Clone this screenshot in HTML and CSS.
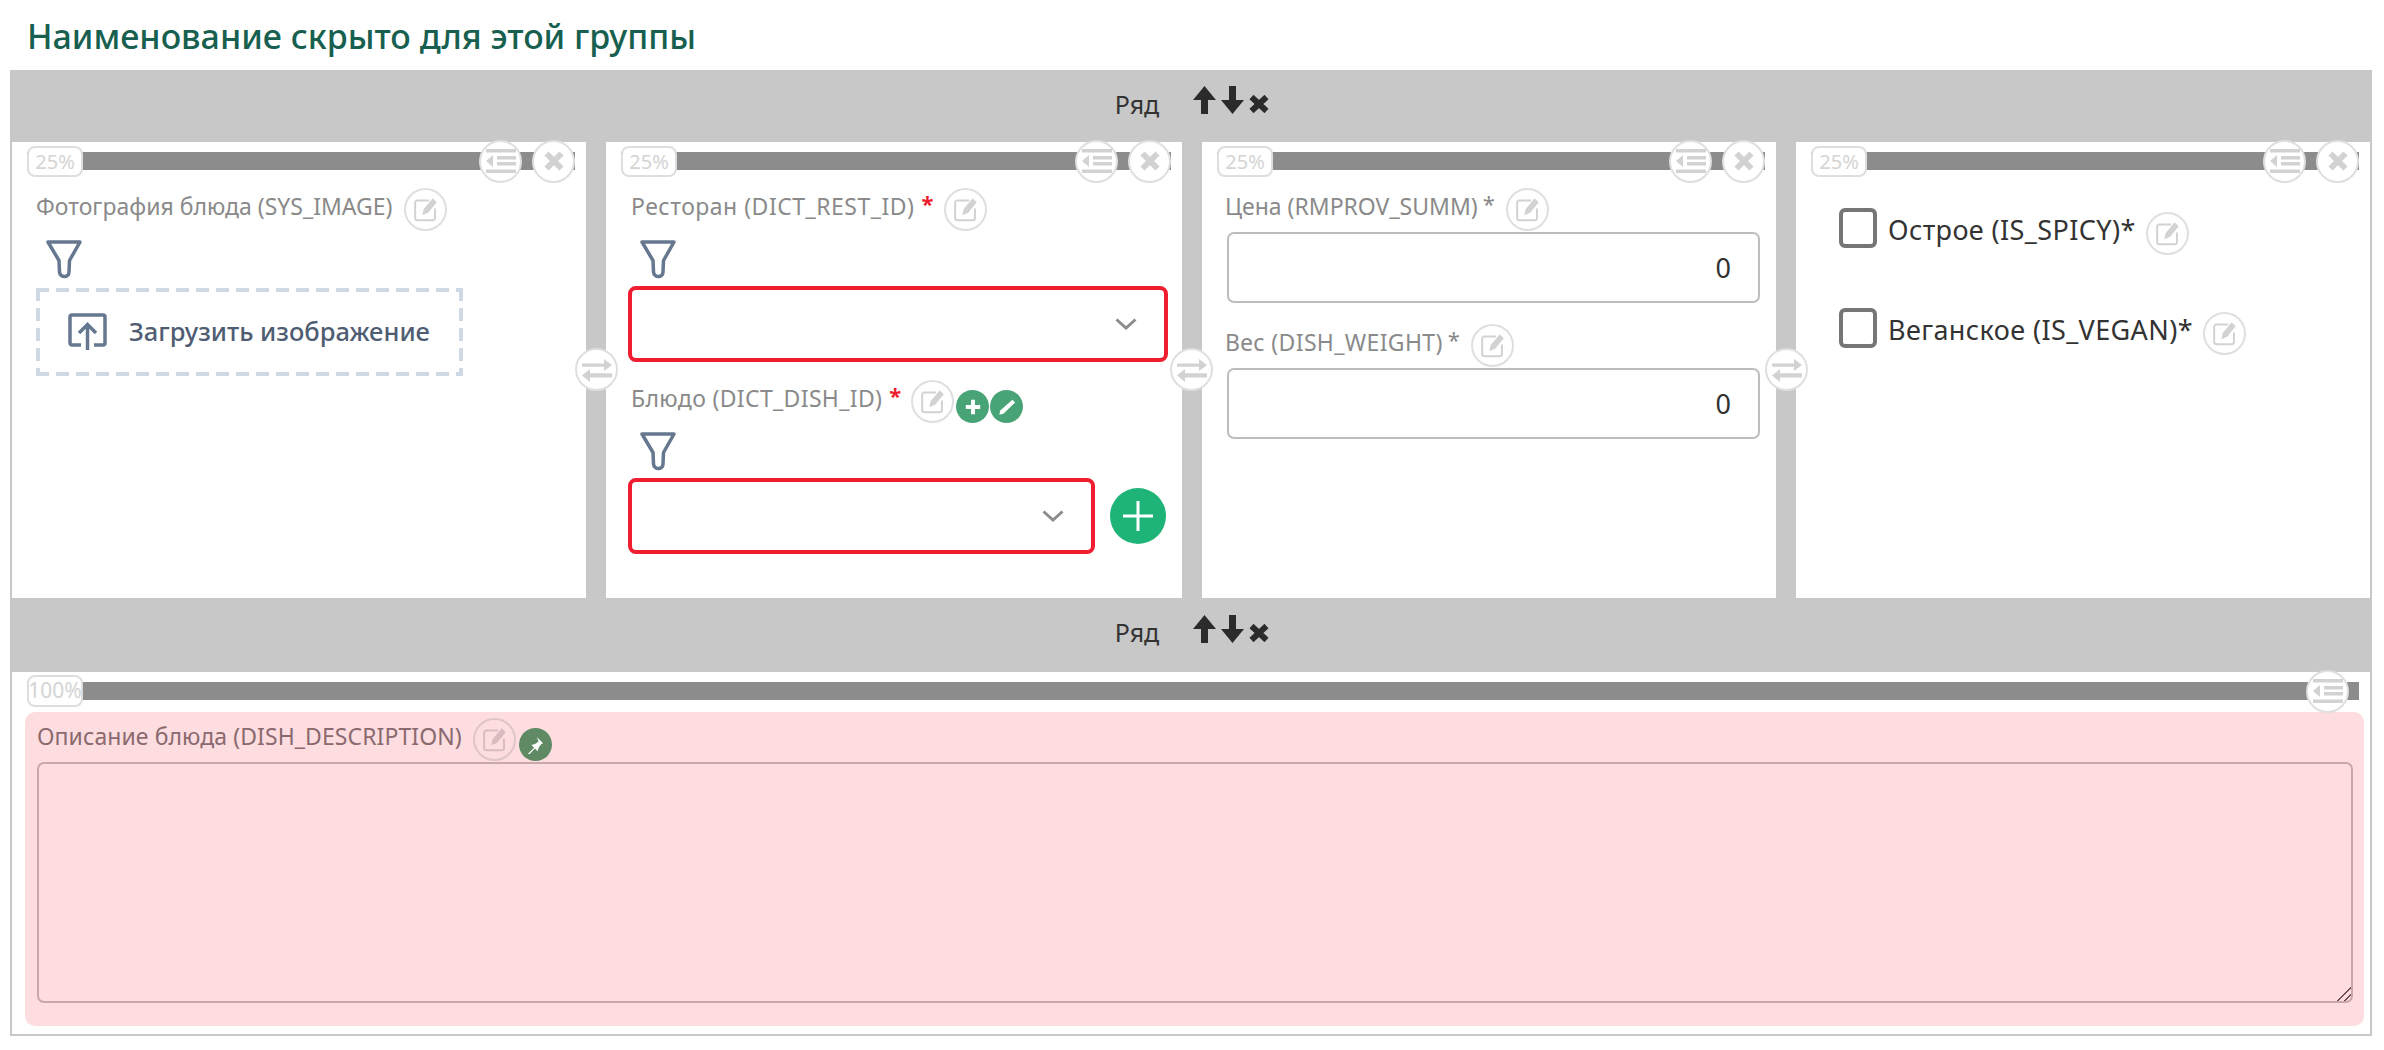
FILE: index.html
```html
<!DOCTYPE html>
<html lang="ru">
<head>
<meta charset="utf-8">
<title>Группа</title>
<link rel="stylesheet" href="styles.css">
</head>
<body>
<svg class="defs" width="0" height="0" aria-hidden="true">
  <symbol id="i-edit" viewBox="0 0 30 30"><path d="M19 5H6a2.500 2.500 0 0 0-2.500 2.500v17A2.500 2.500 0 0 0 6 27h17a2.500 2.500 0 0 0 2.500-2.500V14" fill="none" stroke="currentColor" stroke-width="2.200"/><path d="M23 2.500l4.500 4.500L18 18.500l-6.500 3 1.500-7z" fill="currentColor"/></symbol>
  <symbol id="i-menu" viewBox="0 0 30 24"><path d="M0 0h30v3.500H0zM11 7h19v3.500H11zM11 13h19v3.500H11zM0 20.500h30V24H0zM0 12l7-6v12z" fill="currentColor"/></symbol>
  <symbol id="i-x" viewBox="0 0 20 20"><path d="M2.500 2.500l15 15M17.500 2.500l-15 15" stroke="currentColor" stroke-width="6" fill="none"/></symbol>
  <symbol id="i-swap" viewBox="0 0 30 24"><path d="M0 5.500h22V1l8 6-8 6V8.800H0zM30 15.200H8V11l-8 6.500L8 24v-4.500h22z" fill="currentColor"/></symbol>
  <symbol id="i-funnel" viewBox="0 0 36 39"><path d="M2 2h32L23.500 20.500 23 32c0 6-9 6-9.500 0l-.500-11.500z" fill="none" stroke="currentColor" stroke-width="3.500" stroke-linejoin="round"/></symbol>
  <symbol id="i-chev" viewBox="0 0 22 12"><path d="M1.500 1.500L11 10l9.500-8.500" fill="none" stroke="currentColor" stroke-width="3"/></symbol>
  <symbol id="i-plus" viewBox="0 0 20 20"><path d="M7.500 1h5v6.500H19v5h-6.500V19h-5v-6.500H1v-5h6.500z" fill="currentColor"/></symbol>
</svg>

<h1 class="group-title">Наименование скрыто для этой группы</h1>

<div class="panel">
  <div class="row-head">
    <span class="row-name">Ряд</span>
    <span class="row-tools">
      <svg class="arrow" viewBox="0 0 23 28"><path d="M11.500 0L23 14h-8v14H8V14H0z"/></svg>
      <svg class="arrow" viewBox="0 0 23 28"><path d="M8 0h7v14h8L11.500 28 0 14h8z"/></svg>
      <svg class="row-x" viewBox="0 0 20 18"><path d="M2.500 2l15 14M17.500 2l-15 14" stroke="#2b2b2b" stroke-width="6" fill="none"/></svg>
    </span>
  </div>

  <div class="cols">
    <section class="col">
      <div class="width-bar">
        <span class="pill">25%</span>
        <button class="tool tool-push"><svg class="ic-menu"><use href="#i-menu"/></svg></button>
        <button class="tool"><svg class="ic-x"><use href="#i-x"/></svg></button>
      </div>
      <div class="body body-one">
        <div class="field-head">
          <span class="label">Фотография блюда (SYS_IMAGE)</span>
          <button class="tool"><svg class="ic-edit"><use href="#i-edit"/></svg></button>
        </div>
        <svg class="funnel"><use href="#i-funnel"/></svg>
        <div class="upload">
          <svg class="upload-ic" viewBox="0 0 39 37"><path d="M13 32H4a2 2 0 0 1-2-2V4a2 2 0 0 1 2-2h31a2 2 0 0 1 2 2v26a2 2 0 0 1-2 2h-9M19.500 37V12M11 20l8.500-8.500L28 20" fill="none" stroke="currentColor" stroke-width="3.500"/></svg>
          <span class="upload-text">Загрузить изображение</span>
        </div>
      </div>
    </section>

    <button class="tool swap swap-1"><svg class="ic-swap"><use href="#i-swap"/></svg></button>

    <section class="col">
      <div class="width-bar">
        <span class="pill">25%</span>
        <button class="tool tool-push"><svg class="ic-menu"><use href="#i-menu"/></svg></button>
        <button class="tool"><svg class="ic-x"><use href="#i-x"/></svg></button>
      </div>
      <div class="body body-two">
        <div class="field-head">
          <span class="label label-wider">Ресторан (DICT_REST_ID)</span><span class="star star-red">*</span>
          <button class="tool"><svg class="ic-edit"><use href="#i-edit"/></svg></button>
        </div>
        <svg class="funnel"><use href="#i-funnel"/></svg>
        <div class="select"><svg class="chev"><use href="#i-chev"/></svg></div>
        <div class="field-head field-next">
          <span class="label label-spaced">Блюдо (DICT_DISH_ID)</span><span class="star star-red">*</span>
          <button class="tool tool-tight"><svg class="ic-edit"><use href="#i-edit"/></svg></button>
          <span class="mini mini-add"><svg class="ic-mini"><use href="#i-plus"/></svg></span>
          <span class="mini"><svg class="ic-pen" viewBox="0 0 20 20"><path d="M16 2l3 3L6 17.500l-4.500 1 1-4.500z" fill="#fff"/></svg></span>
        </div>
        <svg class="funnel"><use href="#i-funnel"/></svg>
        <div class="select-row">
          <div class="select select-short"><svg class="chev"><use href="#i-chev"/></svg></div>
          <span class="add-big"><svg viewBox="0 0 30 30"><path d="M13.500 0h3v13.500H30v3H16.500V30h-3V16.500H0v-3h13.500z" fill="#fff"/></svg></span>
        </div>
      </div>
    </section>

    <button class="tool swap swap-2"><svg class="ic-swap"><use href="#i-swap"/></svg></button>

    <section class="col">
      <div class="width-bar">
        <span class="pill">25%</span>
        <button class="tool tool-push"><svg class="ic-menu"><use href="#i-menu"/></svg></button>
        <button class="tool"><svg class="ic-x"><use href="#i-x"/></svg></button>
      </div>
      <div class="body body-three">
        <div class="field-head">
          <span class="label">Цена (RMPROV_SUMM)</span><span class="star">*</span>
          <button class="tool"><svg class="ic-edit"><use href="#i-edit"/></svg></button>
        </div>
        <div class="num">0</div>
        <div class="field-head field-num">
          <span class="label label-spaced">Вес (DISH_WEIGHT)</span><span class="star">*</span>
          <button class="tool"><svg class="ic-edit"><use href="#i-edit"/></svg></button>
        </div>
        <div class="num">0</div>
      </div>
    </section>

    <button class="tool swap swap-3"><svg class="ic-swap"><use href="#i-swap"/></svg></button>

    <section class="col">
      <div class="width-bar">
        <span class="pill">25%</span>
        <button class="tool tool-push"><svg class="ic-menu"><use href="#i-menu"/></svg></button>
        <button class="tool"><svg class="ic-x"><use href="#i-x"/></svg></button>
      </div>
      <div class="body body-four">
        <div class="check-row">
          <span class="box"></span>
          <span class="check-label">Острое (IS_SPICY)*</span>
          <button class="tool tool-low"><svg class="ic-edit"><use href="#i-edit"/></svg></button>
        </div>
        <div class="check-row">
          <span class="box"></span>
          <span class="check-label">Веганское (IS_VEGAN)*</span>
          <button class="tool tool-low"><svg class="ic-edit"><use href="#i-edit"/></svg></button>
        </div>
      </div>
    </section>
  </div>

  <div class="row-head row-head-2">
    <span class="row-name">Ряд</span>
    <span class="row-tools">
      <svg class="arrow" viewBox="0 0 23 28"><path d="M11.500 0L23 14h-8v14H8V14H0z"/></svg>
      <svg class="arrow" viewBox="0 0 23 28"><path d="M8 0h7v14h8L11.500 28 0 14h8z"/></svg>
      <svg class="row-x" viewBox="0 0 20 18"><path d="M2.500 2l15 14M17.500 2l-15 14" stroke="#2b2b2b" stroke-width="6" fill="none"/></svg>
    </span>
  </div>

  <section class="wide">
    <div class="width-bar">
      <span class="pill pill-wide">100%</span>
      <button class="tool tool-push"><svg class="ic-menu"><use href="#i-menu"/></svg></button>
    </div>
    <div class="pink">
      <div class="field-head">
        <span class="label label-wide">Описание блюда (DISH_DESCRIPTION)</span>
        <button class="tool"><svg class="ic-edit"><use href="#i-edit"/></svg></button>
        <span class="mini mini-pin"><svg class="ic-pen" viewBox="0 0 20 20"><path d="M12 1l7 7-2 1-3 4-1 4-3-3-7 7-1-1 7-7-3-3 4-1 4-3z" fill="#fff"/></svg></span>
      </div>
      <textarea class="area"></textarea>
    </div>
  </section>
</div>
</body>
</html>
```

FILE: styles.css
```css
* { box-sizing: border-box; }
html, body { margin: 0; padding: 0; background: #fff; }
body { width: 2384px; height: 1050px; overflow: hidden; font-family: "Noto Sans", Roboto, sans-serif; }
.defs { position: absolute; }

.group-title {
  margin: 0;
  height: 70px;
  padding: 15px 0 0 27px;
  font-size: 34px;
  line-height: 42px;
  font-weight: 500;
  color: #17604f;
  white-space: nowrap;
}

.panel {
  position: relative;
  width: 2362px;
  height: 966px;
  margin-left: 10px;
  border: 2px solid #c8c8c8;
  border-top: 0;
}
.row-head {
  height: 72px;
  margin: 0 -2px;
  background: #c8c8c8;
  display: flex;
  align-items: center;
  justify-content: center;
  gap: 34px;
  padding: 0 0 5px 2px;
}
.row-head-2 { height: 74px; padding-bottom: 6px; }
.row-name { font-size: 25px; color: #333; }
.row-tools { display: flex; align-items: center; gap: 5px; margin-bottom: 7px; }
.arrow { width: 23px; height: 28px; fill: #2b2b2b; }
.row-x { width: 20px; height: 18px; margin-top: 8px; }

.cols {
  display: grid;
  grid-template-columns: 574px 576px 574px 574px;
  height: 456px;
  gap: 20px;
  background: #c8c8c8;
  position: relative;
}
.col { min-width: 0; background: #fff; }

.swap { position: absolute; top: 206px; }
.swap-1 { left: 563px; }
.swap-2 { left: 1158px; }
.swap-3 { left: 1753px; }

.width-bar {
  height: 18px;
  margin: 10px 11px 0 15px;
  background: #8c8c8c;
  display: flex;
  align-items: center;
}
.pill {
  flex: none;
  width: 56px;
  height: 31px;
  border: 2px solid #dedede;
  border-radius: 8px;
  background: #fff;
  color: #d4d4d4;
  font-size: 20px;
  line-height: 27px;
  display: flex;
  justify-content: center;
  white-space: nowrap;
}
.pill-wide { height: 32px; font-size: 21px; }
.tool {
  flex: none;
  width: 43px;
  height: 43px;
  padding: 0;
  border: 2px solid #dfdfdf;
  border-radius: 50%;
  background: #fff;
  color: #d2d2d2;
  display: inline-flex;
  align-items: center;
  justify-content: center;
}
.tool-push { margin-left: auto; margin-right: 10px; }
.ic-menu { width: 30px; height: 24px; }
.ic-x { width: 20px; height: 20px; }
.ic-edit { width: 27px; height: 27px; }
.ic-swap { width: 30px; height: 24px; }

.body-one { padding: 18px 0 0 24px; }
.body-two { padding: 18px 14px 0 22px; }
.body-three { padding: 18px 16px 0 25px; }
.body-four { padding: 38px 0 0 43px; }

.field-head { height: 43px; display: flex; align-items: flex-start; }
.field-head .tool { margin-left: 11px; }
.field-head .tool-tight { margin-left: 10px; }
.label {
  font-size: 23px;
  line-height: 37px;
  color: #8a8a8a;
  white-space: nowrap;
}
.label-spaced { letter-spacing: .35px; }
.label-wider { letter-spacing: .5px; }
.label-wide { letter-spacing: .08px; }
.star { margin-left: 7px; font-size: 22px; line-height: 30px; color: #888; }
.star-red { color: #ef1c2e; font-weight: 700; }

.body-two .field-head { padding-left: 3px; }
.body-three .field-head { margin-left: -2px; }
.body-three .star { margin-left: 5px; }

.funnel { display: block; width: 36px; height: 39px; margin: 9px 0 0 10px; color: #66788f; }
.body-two .funnel { margin: 9px 0 0 12px; }

.upload {
  width: 427px;
  height: 88px;
  margin-top: 9px;
  padding: 0 0 2px 32px;
  background:
    repeating-linear-gradient(90deg, #cfd8e3 0 13px, transparent 13px 20px) left top / 100% 4px no-repeat,
    repeating-linear-gradient(90deg, #cfd8e3 0 13px, transparent 13px 20px) left bottom / 100% 4px no-repeat,
    repeating-linear-gradient(180deg, #cfd8e3 0 13px, transparent 13px 20px) left top / 4px 100% no-repeat,
    repeating-linear-gradient(180deg, #cfd8e3 0 13px, transparent 13px 20px) right top / 4px 100% no-repeat;
  display: flex;
  align-items: center;
  gap: 22px;
}
.upload-ic { width: 39px; height: 37px; color: #66788f; }
.upload-text { font-size: 25.500px; font-weight: 500; color: #4f5d73; white-space: nowrap; }

.select {
  height: 76px;
  margin-top: 7px;
  border: 4px solid #f01c2f;
  border-radius: 8px;
  display: flex;
  align-items: center;
  justify-content: flex-end;
  padding-right: 27px;
}
.chev { width: 22px; height: 12px; color: #8c8c8c; }
.field-next { margin-top: 18px; }
.select-row { display: flex; align-items: center; gap: 15px; margin-top: 7px; }
.select-short { flex: none; width: 467px; margin-top: 0; }
.add-big {
  flex: none;
  width: 56px;
  height: 56px;
  border-radius: 50%;
  background: #1eb478;
  display: flex;
  align-items: center;
  justify-content: center;
}
.add-big svg { width: 30px; height: 30px; }

.mini {
  flex: none;
  width: 33px;
  height: 33px;
  margin: 10px 0 0 1px;
  border-radius: 50%;
  background: #48a476;
  color: #fff;
  display: flex;
  align-items: center;
  justify-content: center;
}
.mini-add { margin-left: 2px; }
.mini-pin { background: #5f8a63; margin-left: 3px; }
.ic-mini { width: 16px; height: 16px; }
.ic-pen { width: 18px; height: 18px; }

.num {
  height: 71px;
  margin-top: 1px;
  border: 2px solid #bdbdbd;
  border-radius: 7px;
  padding-right: 27px;
  text-align: right;
  font-size: 27px;
  line-height: 67px;
  color: #333;
}
.field-num { margin-top: 21px; }

.check-row { display: flex; align-items: flex-start; height: 48px; margin-bottom: 52px; }
.box { flex: none; width: 38px; height: 40px; border: 4px solid #767676; border-radius: 6px; }
.check-label { margin-left: 11px; font-size: 27px; line-height: 43px; letter-spacing: .4px; color: #333; white-space: nowrap; }
.tool-low { margin: 4px 0 0 10px; }

.wide { height: 362px; }
.pink {
  height: 314px;
  margin: 12px 6px 0 13px;
  padding: 6px 11px 0 12px;
  border-radius: 10px;
  background: #fddde0;
}
.pink .label { color: #8a6a6e; }
.pink .tool { background: transparent; border-color: #e0c5c8; color: #d9bcbf; margin-left: 11px; }
.area {
  display: block;
  width: 100%;
  height: 241px;
  margin: 1px 0 0;
  border: 2px solid #c9a8ac;
  border-radius: 7px;
  background: transparent;
  resize: both;
  outline: none;
}
.area::-webkit-resizer {
  background: linear-gradient(135deg, transparent 0 50%, #6e4a50 50% 57%, transparent 57% 75%, #6e4a50 75% 82%, transparent 82%);
}
```
